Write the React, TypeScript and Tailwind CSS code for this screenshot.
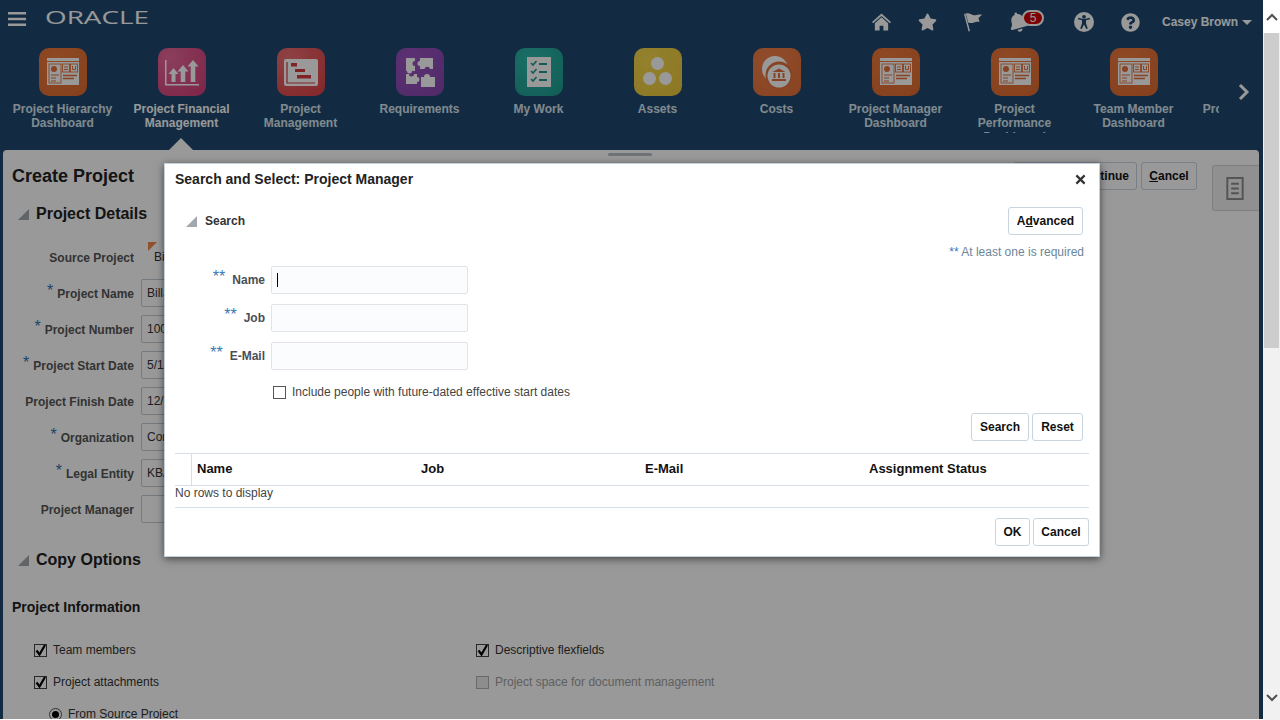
import { ReactNode } from "react"
import { FaStar, FaBell, FaQuestionCircle } from "react-icons/fa"

const sans = "font-['Liberation_Sans',Arial,sans-serif]"

function DashboardGlyph({ c }: { c: string }) {
  return (
    <svg viewBox="0 0 48 48" className="w-12 h-12">
      <rect x="8" y="10" width="32" height="3" fill="#fff" />
      <rect x="8" y="14" width="32" height="23" fill="#fff" />
      <rect x="10" y="16" width="12" height="19" fill="none" stroke={c} strokeWidth="0.9" />
      <circle cx="15" cy="21" r="3" fill={c} />
      <path d="M12 27h8M12 30h5M12 33h5" stroke={c} strokeWidth="1" />
      <rect x="23.5" y="16" width="7" height="8" fill="none" stroke={c} strokeWidth="0.9" />
      <path d="M25 19h4M25 21.500h4" stroke={c} strokeWidth="1" />
      <rect x="31.500" y="16" width="7" height="8" fill="none" stroke={c} strokeWidth="0.9" />
      <path d="M33.500 18v3.500h3V18" fill="none" stroke={c} strokeWidth="1" />
      <path d="M24 27.500h14M24 30.500h11" stroke={c} strokeWidth="1.500" />
    </svg>
  )
}

function FinanceGlyph() {
  return (
    <svg viewBox="0 0 48 48" className="w-12 h-12" fill="#fff">
      <path d="M7 12h1.500v24H41v1.500H7z" />
      <path d="M15.500 20l5 6h-3v8h-4v-8h-3z" />
      <path d="M25 17l5.500 6.500h-3.200V34h-4.600V23.500h-3.200z" />
      <path d="M35 12l5.500 6.500h-3.200V34h-4.600V18.500h-3.200z" />
    </svg>
  )
}

function GanttGlyph() {
  return (
    <svg viewBox="0 0 48 48" className="w-12 h-12">
      <rect x="7" y="11" width="34" height="27" rx="2" fill="#fff" />
      <path d="M10 14v21h28" fill="none" stroke="#d83a40" strokeWidth="1.200" />
      <rect x="14" y="15" width="6" height="3.500" fill="#d83a40" />
      <rect x="18" y="21" width="10" height="3" fill="#d83a40" />
      <rect x="20" y="27" width="14" height="3.500" fill="#d83a40" />
    </svg>
  )
}

function PuzzleGlyph() {
  return (
    <svg viewBox="0 0 48 48" className="w-12 h-12" fill="#fff">
      <path d="M10 10h9v3a2.500 2.500 0 0 0 0 5v5h-3a2.500 2.500 0 0 1-5 0h-1z" />
      <path d="M24 10h13v11h-3a2.800 2.800 0 0 0-5.500 0H24v-3a2.500 2.500 0 0 1 0-5z" />
      <path d="M10 26h3a2.500 2.500 0 0 0 5 0h3v3a2.500 2.500 0 0 1 0 5v2H10z" />
      <path d="M25 29h3a3 3 0 0 1 6 0h5v10H25z" />
    </svg>
  )
}

function ChecklistGlyph() {
  const c = "#1f9c90"
  return (
    <svg viewBox="0 0 48 48" className="w-12 h-12">
      <rect x="12" y="9" width="24" height="30" fill="#fff" />
      {[16, 24, 32].map((y) => (
        <g key={y}>
          <path d={`M16 ${y - 1}l2 2 3.500-4`} fill="none" stroke={c} strokeWidth="1.700" />
          <path d={`M24 ${y}h8`} stroke={c} strokeWidth="2" />
        </g>
      ))}
    </svg>
  )
}

function DotsGlyph() {
  return (
    <svg viewBox="0 0 48 48" className="w-12 h-12" fill="#fff">
      <circle cx="23.500" cy="15.500" r="6.500" />
      <circle cx="15.500" cy="30.500" r="6.500" />
      <circle cx="31.500" cy="30.500" r="6.500" />
    </svg>
  )
}

function CostsGlyph() {
  const c = "#e2703a"
  return (
    <svg viewBox="0 0 48 48" className="w-12 h-12">
      <circle cx="22" cy="21" r="13" fill="#fff" />
      <circle cx="26" cy="27" r="13.500" fill={c} />
      <circle cx="26" cy="28" r="11.500" fill="#fff" />
      <path d="M26 20.500l6.500 3.500h-13z" fill={c} />
      <rect x="20.500" y="25" width="2" height="5" fill={c} />
      <rect x="25" y="25" width="2" height="5" fill={c} />
      <rect x="29.500" y="25" width="2" height="5" fill={c} />
      <rect x="19" y="31" width="14" height="2" fill={c} />
    </svg>
  )
}

const tiles: { label: string; bg: string; glyph: ReactNode; active?: boolean }[] = [
  { label: "Project Hierarchy Dashboard", bg: "bg-[radial-gradient(circle_at_35%_25%,#ee7a3e,#dd6a30)]", glyph: <DashboardGlyph c="#e2703a" /> },
  { label: "Project Financial Management", bg: "bg-[radial-gradient(circle_at_25%_20%,#e8689a,#d23c76)]", glyph: <FinanceGlyph />, active: true },
  { label: "Project Management", bg: "bg-[radial-gradient(circle_at_25%_20%,#ec6f73,#dc3f44)]", glyph: <GanttGlyph /> },
  { label: "Requirements", bg: "bg-[radial-gradient(circle_at_30%_25%,#9a52c0,#8646ae)]", glyph: <PuzzleGlyph /> },
  { label: "My Work", bg: "bg-[radial-gradient(circle_at_35%_25%,#2bb8aa,#1f9c90)]", glyph: <ChecklistGlyph /> },
  { label: "Assets", bg: "bg-[radial-gradient(circle_at_30%_25%,#f6d84e,#e8c63c)]", glyph: <DotsGlyph /> },
  { label: "Costs", bg: "bg-[radial-gradient(circle_at_35%_25%,#f08048,#e2703a)]", glyph: <CostsGlyph /> },
  { label: "Project Manager Dashboard", bg: "bg-[radial-gradient(circle_at_35%_25%,#ee7a3e,#dd6a30)]", glyph: <DashboardGlyph c="#e2703a" /> },
  { label: "Project Performance Dashboard", bg: "bg-[radial-gradient(circle_at_35%_25%,#ee7a3e,#dd6a30)]", glyph: <DashboardGlyph c="#e2703a" /> },
  { label: "Team Member Dashboard", bg: "bg-[radial-gradient(circle_at_35%_25%,#ee7a3e,#dd6a30)]", glyph: <DashboardGlyph c="#e2703a" /> },
  { label: "Project Hierarchy Dashboard", bg: "bg-[radial-gradient(circle_at_35%_25%,#ee7a3e,#dd6a30)]", glyph: <DashboardGlyph c="#e2703a" /> },
]

const formRows = [
  { label: "Project Name", star: true, value: "Billable" },
  { label: "Project Number", star: true, value: "1000" },
  { label: "Project Start Date", star: true, value: "5/1/17" },
  { label: "Project Finish Date", star: false, value: "12/31/17" },
  { label: "Organization", star: true, value: "Corporate" },
  { label: "Legal Entity", star: true, value: "KBA Ltd" },
  { label: "Project Manager", star: false, value: "" },
]

function Triangle() {
  return <span className="block w-0 h-0 border-l-[11px] border-l-transparent border-b-[11px] border-b-[#a4a8ae]" />
}

function Btn({ children, className = "" }: { children: ReactNode; className?: string }) {
  return (
    <button className={`h-7 px-0 shrink-0 bg-white border border-[#c9d4df] rounded-[3px] text-xs font-bold text-[#111] ${className}`}>
      {children}
    </button>
  )
}

function Check({ label, checked = true, disabled = false }: { label: string; checked?: boolean; disabled?: boolean }) {
  return (
    <div className={`flex items-center gap-[6px] h-[14px] text-xs ${disabled ? "text-[#a0a0a0]" : "text-[#333]"}`}>
      <span className={`w-[13px] h-[13px] border flex items-center justify-center ${disabled ? "border-[#b0b0b0] bg-[#ececec]" : "border-[#444] bg-white"}`}>
        {checked && (
          <svg viewBox="0 0 13 13" className="w-[13px] h-[13px] overflow-visible">
            <path d="M2.500 6.500l3 4 5.500-9.500" fill="none" stroke="#000" strokeWidth="2.200" />
          </svg>
        )}
      </span>
      {label}
    </div>
  )
}

function SearchField({ label, cursor = false }: { label: string; cursor?: boolean }) {
  return (
    <div className="flex items-center gap-[6px] h-7">
      <div className="w-[90px] flex justify-end items-center text-xs font-bold text-[#4a4f55]">
        <span className="text-[#3b78b5] text-base leading-none mr-[7px] -mt-[6px] font-normal">**</span>
        {label}
      </div>
      <div className="w-[197px] h-7 bg-[#fbfcfe] border border-[#e0e4e9] rounded-[2px] flex items-center pl-[5px]">
        {cursor && <span className="block w-px h-[14px] bg-black" />}
      </div>
    </div>
  )
}

function Dialog() {
  return (
    <div className="absolute left-[164px] top-[163px] w-[936px] h-[394px] bg-white border border-[#c5d0da] shadow-[0_2px_8px_rgba(0,0,0,0.55)] px-[10px] flex flex-col">
      <div className="h-[30px] flex items-center justify-between shrink-0">
        <span className="text-sm font-bold text-[#222]">Search and Select: Project Manager</span>
        <svg viewBox="0 0 12 12" className="w-[11px] h-[11px] mr-[3px]">
          <path d="M1.500 1.500l9 9M10.500 1.500l-9 9" stroke="#333" strokeWidth="2.400" />
        </svg>
      </div>

      <div className="flex items-center justify-between mt-[13px] pl-[11px] pr-[6px]">
        <div className="flex items-center gap-2">
          <Triangle />
          <span className="text-xs font-bold text-[#333]">Search</span>
        </div>
        <Btn className="w-[75px]">
          A<span className="underline">d</span>vanced
        </Btn>
      </div>
      <div className="mt-[10px] h-[14px] leading-[14px] text-xs text-right pr-[5px] text-[#6b8699]">
        <span className="text-[#3b78b5]">**</span> At least one is required
      </div>

      <div className="mt-[7px] flex flex-col gap-[10px]">
        <SearchField label="Name" cursor />
        <SearchField label="Job" />
        <SearchField label="E-Mail" />
      </div>

      <div className="mt-[15px] pl-[98px]">
        <div className="flex items-center gap-[6px] h-[14px] text-xs text-[#444]">
          <span className="w-[13px] h-[13px] border border-[#555] bg-white" />
          Include people with future-dated effective start dates
        </div>
      </div>

      <div className="mt-[14px] flex justify-end gap-[3px] pr-[6px]">
        <Btn className="w-[58px]">Search</Btn>
        <Btn className="w-[51px]">Reset</Btn>
      </div>

      <div className="mt-3 border-t border-[#d6dfe8]">
        <div className="flex h-[32px] pb-[2px] border-b border-[#d6dfe8] text-[13px] font-bold text-[#111]">
          <div className="w-[17px] border-r border-[#d6dfe8] -mb-[2px]" />
          <div className="w-[224px] pl-[5px] flex items-center">Name</div>
          <div className="w-[224px] pl-[5px] flex items-center">Job</div>
          <div className="w-[224px] pl-[5px] flex items-center">E-Mail</div>
          <div className="flex-1 pl-[5px] flex items-center">Assignment Status</div>
        </div>
        <div className="h-[22px] border-b border-[#d6dfe8] text-xs leading-[14px] text-[#444]">No rows to display</div>
      </div>

      <div className="mt-[10px] flex justify-end gap-[3px]">
        <Btn className="w-[35px]">OK</Btn>
        <Btn className="w-[56px]">Cancel</Btn>
      </div>
    </div>
  )
}

function Panel() {
  return (
    <div className="relative mx-[3px] w-[1256px] h-[569px] bg-white rounded-t-[4px] flex overflow-hidden">
      <span className="absolute left-[605px] top-[3px] w-[44px] h-[3px] rounded-sm bg-[#b9bec6]" />
      <div className="flex-1 pl-[9px] pt-3">
        <div className="flex items-center justify-between h-7">
          <h1 className="text-lg font-bold text-[#222]">Create Project</h1>
          <div className="flex gap-1">
            <Btn className="w-[124px] border-[#b4bec8]">Save and Continue</Btn>
            <Btn className="w-[56px] border-[#b4bec8]">
              <span className="underline">C</span>ancel
            </Btn>
          </div>
        </div>

        <div className="flex items-center gap-[7px] mt-[10px] pl-[6px] h-[28px]">
          <Triangle />
          <h2 className="text-base font-bold text-[#222]">Project Details</h2>
        </div>

        <div className="mt-[15px] flex flex-col gap-2">
          <div className="flex items-center gap-[7px] h-7">
            <div className="w-[122px] pt-px text-right text-xs font-bold text-[#555]">Source Project</div>
            <div className="relative pl-[13px] text-xs text-[#333]">
              <span className="absolute left-[7px] -top-[7px] w-0 h-0 border-t-[9px] border-t-[#ee8a4a] border-r-[9px] border-r-transparent" />
              Billable
            </div>
          </div>
          {formRows.map((r) => (
            <div key={r.label} className="flex items-center gap-[7px] h-7">
              <div className="w-[122px] pt-px text-right text-xs font-bold text-[#555] whitespace-nowrap">
                {r.star && <span className="text-[#2e73b0] text-base leading-none font-normal mr-[4px] relative -top-[2px]">*</span>}
                {r.label}
              </div>
              <div className="w-[200px] h-7 border border-[#c4ccd4] rounded-[2px] bg-white pl-[5px] text-xs leading-[26px] text-[#333]">{r.value}</div>
            </div>
          ))}
        </div>

        <div className="flex items-center gap-[7px] mt-[23px] pl-[6px] h-[28px]">
          <Triangle />
          <h2 className="text-base font-bold text-[#222]">Copy Options</h2>
        </div>

        <h3 className="mt-[23px] text-sm leading-[20px] font-bold text-[#222]">Project Information</h3>

        <div className="mt-[26px] pl-[22px] flex">
          <div className="w-[442px] flex flex-col gap-[18px]">
            <Check label="Team members" />
            <Check label="Project attachments" />
            <div className="flex items-center gap-[6px] h-[14px] pl-[15px] text-xs text-[#333]">
              <span className="w-[13px] h-[13px] rounded-full border border-[#555] bg-white flex items-center justify-center">
                <span className="w-[7px] h-[7px] rounded-full bg-black" />
              </span>
              From Source Project
            </div>
          </div>
          <div className="flex flex-col gap-[18px]">
            <Check label="Descriptive flexfields" />
            <Check label="Project space for document management" checked={false} disabled />
          </div>
        </div>
      </div>

      <div className="w-[62px] shrink-0 pt-[15px] pl-[15px]">
        <div className="w-[47px] h-[46px] bg-[#f0f0f0] border border-[#d4d4d4] border-r-0 rounded-l-[3px] flex items-center justify-center pr-[2px]">
          <svg viewBox="0 0 18 24" className="w-[18px] h-[23px]">
            <rect x="1" y="1" width="16" height="22" fill="none" stroke="#8a8a8a" strokeWidth="2" />
            <path d="M5 7h8M5 12h8M5 17h8" stroke="#8a8a8a" strokeWidth="2" />
          </svg>
        </div>
      </div>
    </div>
  )
}

export default function App() {
  return (
    <div className={`${sans} w-[1280px] h-[720px] bg-white flex overflow-hidden`}>
      <div className="relative w-[1263px] h-[719px] bg-[#1e4970] overflow-hidden">
        <header className="h-[44px] flex items-center text-white">
          <svg viewBox="0 0 20 16" className="ml-2 w-[19px] h-4 -mt-[7px]">
            <path d="M0 2h19M0 8h19M0 14h19" stroke="#fff" strokeWidth="2.600" />
          </svg>
          <span className="ml-[18px] w-[82px] inline-block font-['Open_Sans',sans-serif] font-normal text-[17.500px] leading-none origin-left scale-x-[1.590] -translate-y-[4px]">ORACLE</span>
          <div className="flex-1" />
          <svg viewBox="0 0 20 18" className="w-[19px] h-[18px] mr-[27px]" fill="#fff">
            <path d="M10 0L0 9l1.200 1.300L10 2.600l8.800 7.700L20 9z" />
            <path d="M10 4L3 10.200V18h5v-5h4v5h5v-7.800z" />
          </svg>
          <FaStar className="w-[19px] h-[18px] mr-[26px]" />
          <svg viewBox="0 0 20 20" className="w-[20px] h-[20px] mr-[25px]" fill="#fff">
            <path d="M1 2l1.400-.4L7 19l-1.400.4z" />
            <path d="M2.800 1.500c4-1.300 6.500 2.500 9.500 1.700 2.500-.6 4.500-1 6.700-.5l-3.500 3.300 1 4c-3-.5-5 .5-7 1-2 .4-3.500-.4-4.300-.6z" />
          </svg>
          <div className="relative mr-[46px]">
            <FaBell className="w-[20px] h-[20px] -rotate-[15deg]" />
            <span className="absolute left-[14px] -top-[2px] w-[22px] h-[16px] rounded-[8px] bg-[#d40000] border-2 border-white text-xs leading-[12px] text-center text-white">5</span>
          </div>
          <svg viewBox="0 0 20 20" className="w-5 h-5 mr-[27px]">
            <circle cx="10" cy="10" r="10" fill="#fff" />
            <circle cx="10" cy="4.800" r="1.900" fill="#1e4970" />
            <path d="M4 7.200l4 1.100v3.200L6.200 16.500l1.500.6L10 12.500l2.300 4.600 1.500-.6-1.800-5V8.300l4-1.100-.4-1.400-4.600 1.200H9L4.400 5.800z" fill="#1e4970" />
          </svg>
          <FaQuestionCircle className="w-[19px] h-[19px] mr-[22px]" />
          <span className="text-xs font-bold">Casey Brown</span>
          <span className="ml-1 w-0 h-0 border-x-[5px] border-x-transparent border-t-[5px] border-t-white mr-[11px]" />
        </header>

        <nav className="h-[106px] flex items-start relative">
          <div className="ml-[3px] w-[1216px] h-[89px] pt-1 flex overflow-hidden">
            {tiles.map((t, i) => (
              <div key={i} className="w-[119px] shrink-0 flex flex-col items-center">
                <div className={`w-12 h-12 rounded-[10px] shrink-0 ${t.bg}`}>{t.glyph}</div>
                <div className={`mt-[6px] w-[112px] h-[31px] overflow-hidden text-center text-xs leading-[14px] font-bold ${t.active ? "text-white" : "text-[#d8e4ee]"}`}>
                  {t.label}
                </div>
              </div>
            ))}
          </div>
          <svg viewBox="0 0 12 18" className="absolute left-[1238px] top-[39px] w-3 h-[18px]">
            <path d="M2 2l7 7-7 7" fill="none" stroke="#fff" strokeWidth="3" />
          </svg>
          <span className="absolute left-[169px] top-[94px] w-0 h-0 border-x-[12px] border-x-transparent border-b-[12px] border-b-white" />
        </nav>

        <Panel />

        <div className="absolute inset-0 bg-black/40" />
        <Dialog />
      </div>

      <div className="w-[17px] h-[720px] shrink-0 bg-[#f1f1f1] flex flex-col">
        <div className="h-[33px] bg-white flex items-center justify-center shrink-0">
          <svg viewBox="0 0 12 8" className="w-3 h-2">
            <path d="M1 7l5-5 5 5" fill="none" stroke="#505050" strokeWidth="2" />
          </svg>
        </div>
        <div className="ml-px w-[15px] h-[315px] bg-[#cdcdcd]" />
        <div className="flex-1" />
        <div className="h-[44px] flex items-start pt-[18px] justify-center">
          <svg viewBox="0 0 12 8" className="w-3 h-2">
            <path d="M1 1l5 5 5-5" fill="none" stroke="#505050" strokeWidth="2" />
          </svg>
        </div>
      </div>
    </div>
  )
}
